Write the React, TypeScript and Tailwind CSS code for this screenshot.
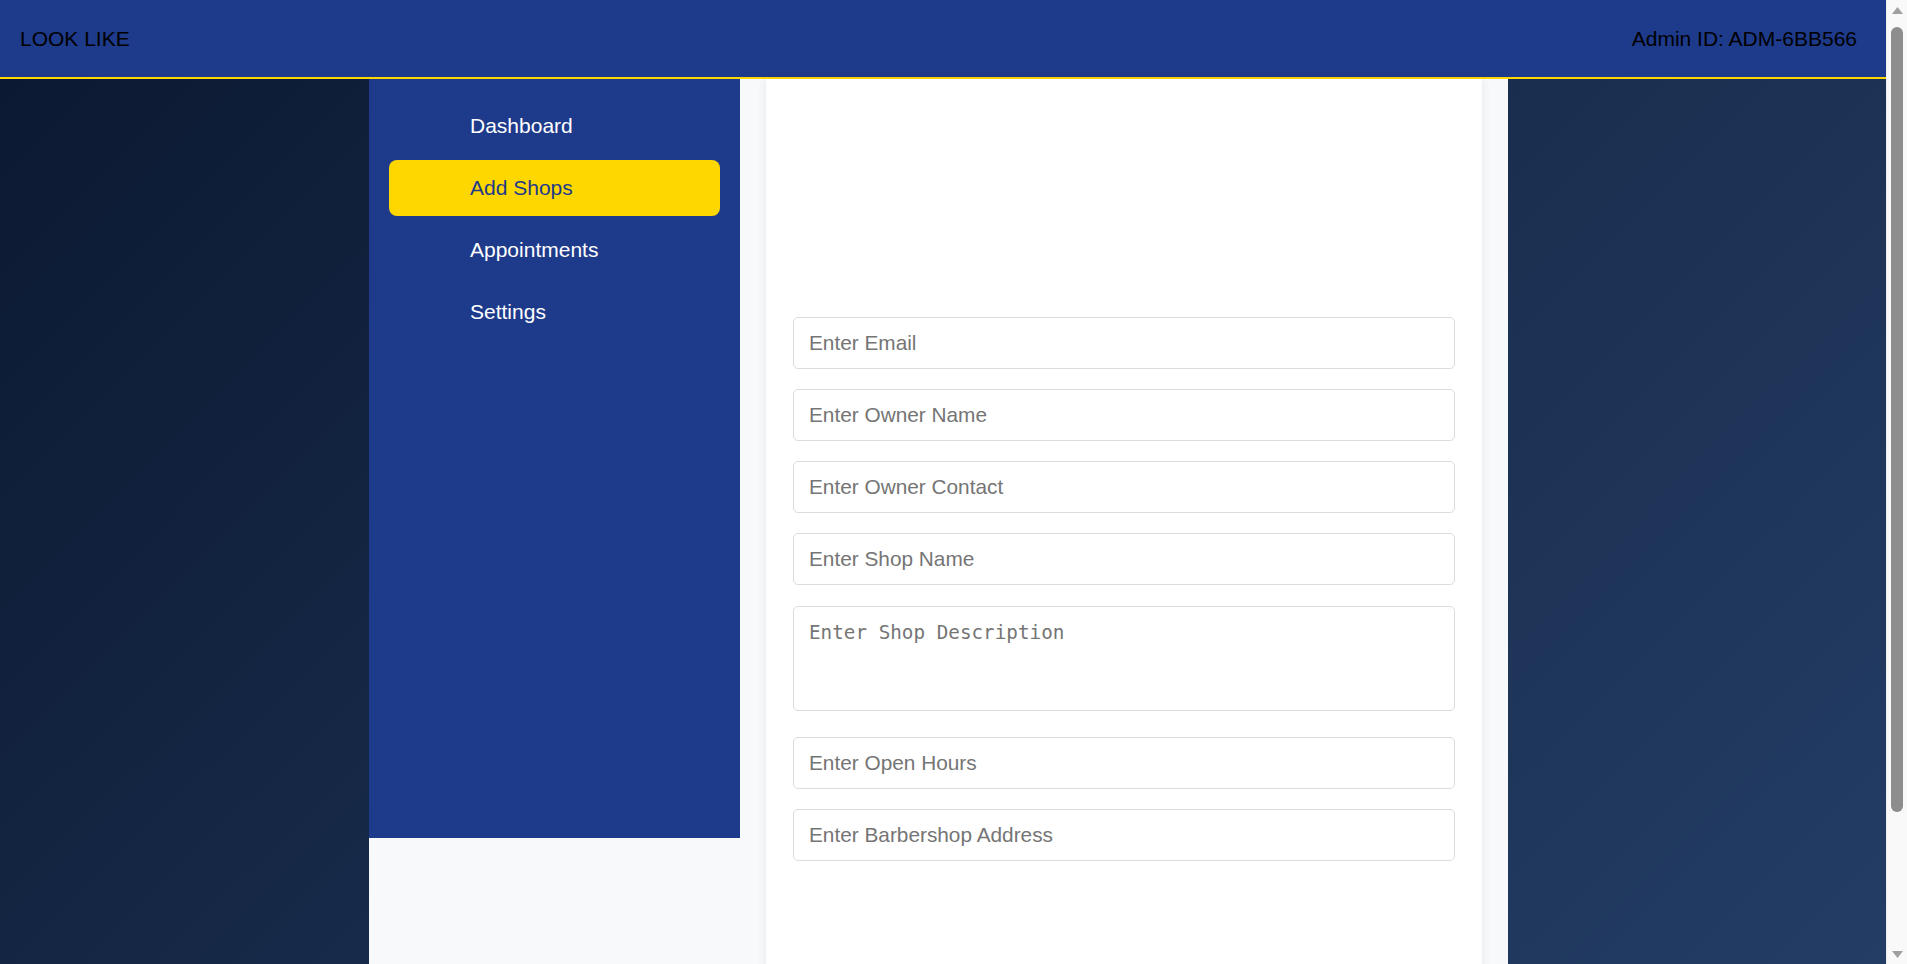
import React from "react";

const navItems = [
  { label: "Dashboard", active: false },
  { label: "Add Shops", active: true },
  { label: "Appointments", active: false },
  { label: "Settings", active: false },
];

const inputClass =
  "block w-full h-[52px] border border-[#dcdcdc] rounded-[5px] bg-white px-[15px] text-[20.8px] text-[#212529] font-['Liberation_Sans',Arial,sans-serif] outline-none placeholder:text-[#757575]";

function ScrollRail() {
  return (
    <div className="w-[21px] shrink-0 h-screen bg-[#f9f9f9] border-l border-[#ececec] flex flex-col items-center">
      <div className="h-[20px] w-full flex items-center justify-center">
        <svg width="11" height="7" viewBox="0 0 11 7">
          <polygon points="5.5,0 11,7 0,7" fill="#a0a0a0" />
        </svg>
      </div>
      <div className="mt-[7px] h-[785px] w-[12px] rounded-full bg-[#8d8d8d]" />
      <div className="flex-1" />
      <div className="h-[20px] w-full flex items-center justify-center">
        <svg width="11" height="7" viewBox="0 0 11 7">
          <polygon points="0,0 11,0 5.5,7" fill="#a0a0a0" />
        </svg>
      </div>
    </div>
  );
}

export default function App() {
  return (
    <div className="h-screen flex overflow-hidden font-['Liberation_Sans',Arial,sans-serif]">
      <div className="flex-1 min-w-0 h-screen overflow-y-auto">
        <div className="min-h-full bg-[linear-gradient(135deg,#0b1830_0%,#1a2f50_55%,#253f68_100%)]">
          <header className="h-[79px] bg-[#1e3a8a] border-b-2 border-[#ffd700] flex items-center justify-between pl-5 pr-[29px] text-[21px] text-black">
            <span>LOOK LIKE</span>
            <span>Admin ID: ADM-6BB566</span>
          </header>

          <div className="flex justify-center pr-[9px]">
            <div className="w-[1139px] bg-[#f8f9fa] flex items-start gap-[26px] min-h-[1063px]">
              <aside className="w-[371px] shrink-0 h-[759px] bg-[#1e3a8a] px-5 pt-[19px] flex flex-col gap-[6px]">
                {navItems.map((item) => (
                  <div
                    key={item.label}
                    className={
                      item.active
                        ? "h-[56px] rounded-[8px] bg-[#ffd700] text-[#1e3a8a] flex items-center pl-[81px] text-[21px]"
                        : "h-[56px] rounded-[8px] text-white flex items-center pl-[81px] text-[21px]"
                    }
                  >
                    {item.label}
                  </div>
                ))}
              </aside>

              <main className="w-[716px] shrink-0 min-h-[1063px] bg-white shadow-[0_0_10px_rgba(0,0,0,0.08)] px-[27px] pt-[238px]">
                <input className={inputClass + " mb-[20px]"} placeholder="Enter Email" />
                <input className={inputClass + " mb-[20px]"} placeholder="Enter Owner Name" />
                <input className={inputClass + " mb-[20px]"} placeholder="Enter Owner Contact" />
                <input className={inputClass + " mb-[21px]"} placeholder="Enter Shop Name" />
                <textarea
                  className="block w-full h-[105px] mb-[26px] border border-[#dcdcdc] rounded-[5px] bg-white px-[15px] py-[14px] text-[19.3px] leading-[24px] text-[#212529] font-['DejaVu_Sans_Mono',monospace] outline-none resize-none placeholder:text-[#757575]"
                  placeholder="Enter Shop Description"
                />
                <input className={inputClass + " mb-[20px]"} placeholder="Enter Open Hours" />
                <input className={inputClass + " mb-[20px]"} placeholder="Enter Barbershop Address" />
              </main>
            </div>
          </div>
        </div>
      </div>
      <ScrollRail />
    </div>
  );
}
